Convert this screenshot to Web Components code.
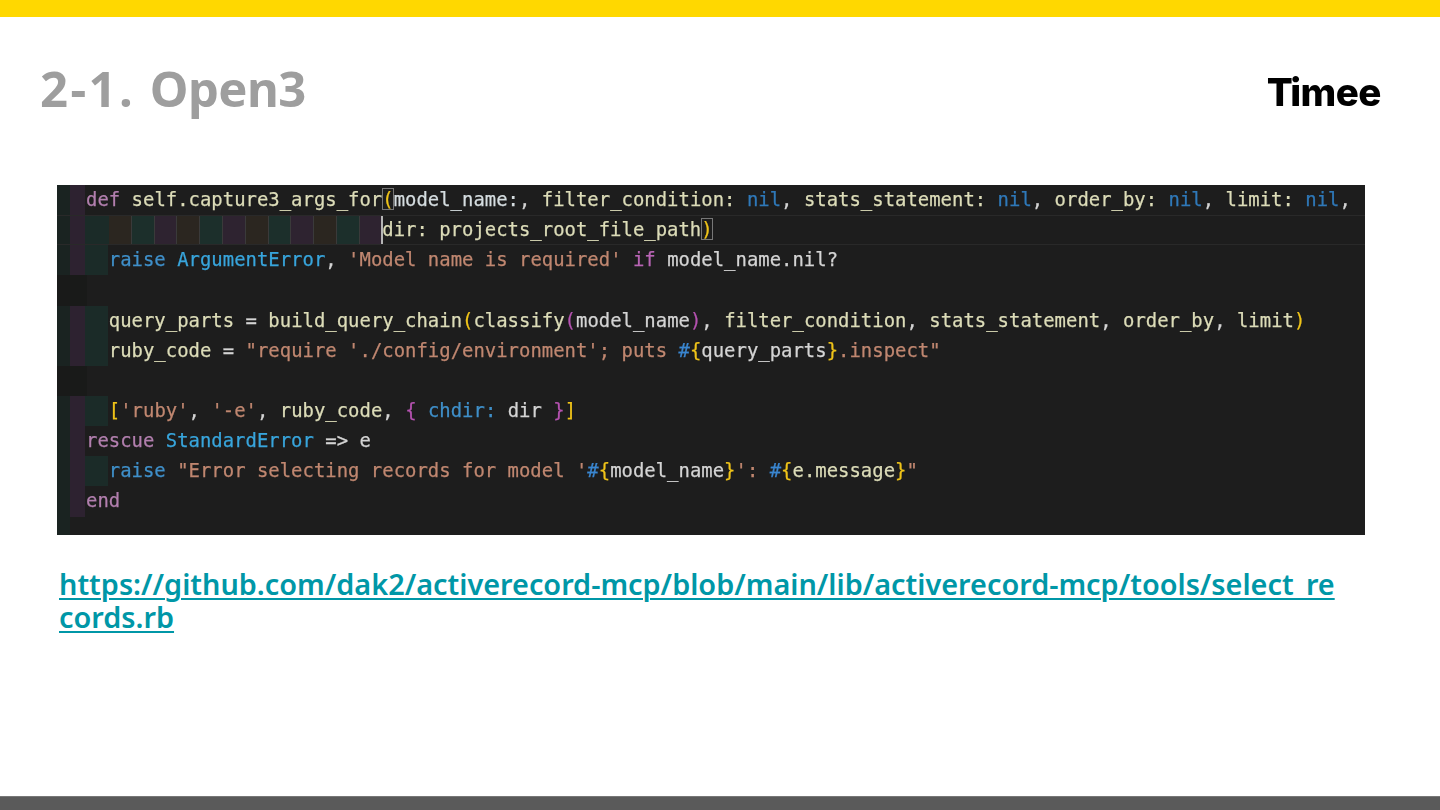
<!DOCTYPE html>
<html lang="en"><head><meta charset="utf-8"><title>2-1. Open3</title>
<style>html,body{margin:0;padding:0;background:#fff}</style></head>
<body>
<x-slide>
  <x-slide-header slot="header"><span class="num">2-1.</span> <span>Open3</span></x-slide-header>
  <x-code>
    <x-line kind="def"><span class="k">def</span> <span class="f">self.capture3_args_for</span><span class="b1">(</span><span class="p">model_name:</span><span class="t">,</span> <span class="f">filter_condition:</span> <span class="n">nil</span><span class="t">,</span> <span class="f">stats_statement:</span> <span class="n">nil</span><span class="t">,</span> <span class="f">order_by:</span> <span class="n">nil</span><span class="t">,</span> <span class="f">limit:</span> <span class="n">nil</span><span class="t">,</span></x-line>
    <x-line kind="wrap" current>                          <span class="cur"></span><span class="f">dir:</span> <span class="f">projects_root_file_path</span><span class="b1">)</span></x-line>
    <x-line kind="in">  <span class="n2">raise</span> <span class="c">ArgumentError</span><span class="t">,</span> <span class="s">'Model name is required'</span> <span class="k2">if</span> <span class="t">model_name.nil?</span></x-line>
    <x-line kind="blank"></x-line>
    <x-line kind="in">  <span class="f">query_parts</span> <span class="t">=</span> <span class="f">build_query_chain</span><span class="y">(</span><span class="f">classify</span><span class="m">(</span><span class="t">model_name</span><span class="m">)</span><span class="t">,</span> <span class="f">filter_condition</span><span class="t">,</span> <span class="f">stats_statement</span><span class="t">,</span> <span class="f">order_by</span><span class="t">,</span> <span class="f">limit</span><span class="y">)</span></x-line>
    <x-line kind="in">  <span class="f">ruby_code</span> <span class="t">=</span> <span class="s">"require './config/environment'; puts </span><span class="h">#</span><span class="y">{</span><span class="t">query_parts</span><span class="y">}</span><span class="s">.inspect"</span></x-line>
    <x-line kind="blank"></x-line>
    <x-line kind="in">  <span class="y">[</span><span class="s">'ruby'</span><span class="t">,</span> <span class="s">'-e'</span><span class="t">,</span> <span class="f">ruby_code</span><span class="t">,</span> <span class="m">{</span> <span class="n2">chdir:</span> <span class="t">dir</span> <span class="m">}</span><span class="y">]</span></x-line>
    <x-line kind="top"><span class="k">rescue</span> <span class="c">StandardError</span> <span class="t">=&gt; e</span></x-line>
    <x-line kind="in">  <span class="n2">raise</span> <span class="s">"Error selecting records for model '</span><span class="h">#</span><span class="y">{</span><span class="t">model_name</span><span class="y">}</span><span class="s">': </span><span class="h">#</span><span class="y">{</span><span class="f">e.message</span><span class="y">}</span><span class="s">"</span></x-line>
    <x-line kind="top"><span class="k">end</span></x-line>
  </x-code>
  <x-source-link href="https://github.com/dak2/activerecord-mcp/blob/main/lib/activerecord-mcp/tools/select_records.rb"></x-source-link>
</x-slide>
<script>
const sheet = (css, html) => `<style>${css}</style>${html}`;
class XSlide extends HTMLElement {
  constructor(){ super(); this.attachShadow({mode:'open'}).innerHTML = sheet(`
    :host{display:flex;flex-direction:column;width:1440px;height:810px;background:#fff;overflow:hidden}
    .top{height:17px;flex:none;background:#ffd800}
    main{flex:1;min-height:0;display:flex;flex-direction:column}
    .bottom{height:14px;flex:none;background:#5a5a5a;border-top:1px solid #777;box-sizing:border-box}
  `, `<div class="top"></div><slot name="header"></slot><main><slot></slot></main><div class="bottom"></div>`); }
}
class XSlideHeader extends HTMLElement {
  constructor(){ super(); this.attachShadow({mode:'open'}).innerHTML = sheet(`
    :host{display:flex;justify-content:space-between;align-items:flex-start;height:168px;padding:0 59px 0 40px;box-sizing:border-box}
    h1{margin:38px 0 0;font:700 49px/66px "Noto Sans",sans-serif;color:#9e9e9e;letter-spacing:-.6px;word-spacing:2.5px}
    ::slotted(.num){letter-spacing:2.4px}
    .logo{margin-top:50px;font:800 38.5px/50px Inter,sans-serif;color:#000;letter-spacing:-.5px;filter:blur(.3px)}
    .logo span{letter-spacing:-2.6px}
  `, `<h1><slot></slot></h1><div class="logo"><span>T</span>imee</div>`); }
}
class XCode extends HTMLElement {
  constructor(){ super(); this.attachShadow({mode:'open'}).innerHTML = sheet(`
    :host{display:block;width:1308px;height:350px;margin-left:57px;background:#1d1d1d;overflow:hidden;
      background-image:linear-gradient(90deg,#1a2321 0 13px,transparent 13px)}
    .in{filter:blur(.5px)}
  `, `<div class="in"><slot></slot></div>`); }
}
const seg = ['#2b2620','#1c2f2b','#2e2330'];
function wrapBg(){
  const parts = ['#1a2321 0 13px','#2d2230 13px 28px','#1b2b28 28px 51.5px'];
  let x = 52;
  for (let i=0;i<12;i++){ const c = seg[i%3]; parts.push(`${c} ${x}px ${x+21.8}px`, `#3a3a3a ${x+21.8}px ${x+22.8}px`); x+=22.8; }
  parts.push(`transparent ${x}px`);
  return `linear-gradient(90deg,${parts.join(',')})`;
}
const kinds = {
  def:'linear-gradient(90deg,#1a2321 0 13px,#2d2230 13px 28px,transparent 28px)',
  top:'linear-gradient(90deg,#1a2321 0 13px,#2d2230 13px 28px,transparent 28px)',
  in:'linear-gradient(90deg,#1a2321 0 13px,#2d2230 13px 28px,#1b2b28 28px 51.5px,transparent 51.5px)',
  blank:'linear-gradient(90deg,#191a19 0 30px,transparent 30px)',
  wrap:wrapBg()
};
class XLine extends HTMLElement {
  constructor(){ super(); this.attachShadow({mode:'open'}).innerHTML = sheet(`
    :host{display:block;box-sizing:border-box;height:30.15px;padding-left:29px;white-space:pre;letter-spacing:.02px;
      font:500 18.9px/29.4px "DejaVu Sans Mono",monospace;color:#d4d4d4;background-image:var(--bg);-webkit-text-stroke:.25px currentColor}
    :host([current]){box-shadow:inset 0 1px #292929,inset 0 -1px #292929}
    ::slotted(.k){color:#b27fae}
    ::slotted(.k2){color:#b965b5}
    ::slotted(.f){color:#dcdcb8}
    ::slotted(.p){color:#d5dde0}
    ::slotted(.t){color:#d4d4d4}
    ::slotted(.n){color:#2f78b8}
    ::slotted(.n2){color:#3f8fc9}
    ::slotted(.c){color:#38a5dc}
    ::slotted(.s){color:#c08770}
    ::slotted(.h){color:#3a86d0}
    ::slotted(.y){color:#f0c419}
    ::slotted(.m){color:#b552b0}
    ::slotted(.b1){color:#f0c419;outline:1px solid #777;outline-offset:-1px}
    ::slotted(.cur){display:inline-block;width:0;height:26px;vertical-align:top;margin-top:2px;box-shadow:0 0 0 1px #b5b5b5}
  `, `<slot></slot>`);
    this.style.setProperty('--bg', kinds[this.getAttribute('kind')] || 'none'); }
}
class XSourceLink extends HTMLElement {
  constructor(){ super(); this.attachShadow({mode:'open'}).innerHTML = sheet(`
    :host{display:block;width:1282px;margin:32px 0 0 59px;font:600 28.85px/33px "Noto Sans",sans-serif;word-break:break-all}
    a{color:#0097a7;text-decoration:underline;text-decoration-thickness:2px;text-underline-offset:3px}
  `, `<a></a>`);
    const a = this.shadowRoot.querySelector('a'), h = this.getAttribute('href'); a.href = h; a.textContent = h; }
}
customElements.define('x-slide', XSlide);
customElements.define('x-slide-header', XSlideHeader);
customElements.define('x-code', XCode);
customElements.define('x-line', XLine);
customElements.define('x-source-link', XSourceLink);
</script>
</body></html>
